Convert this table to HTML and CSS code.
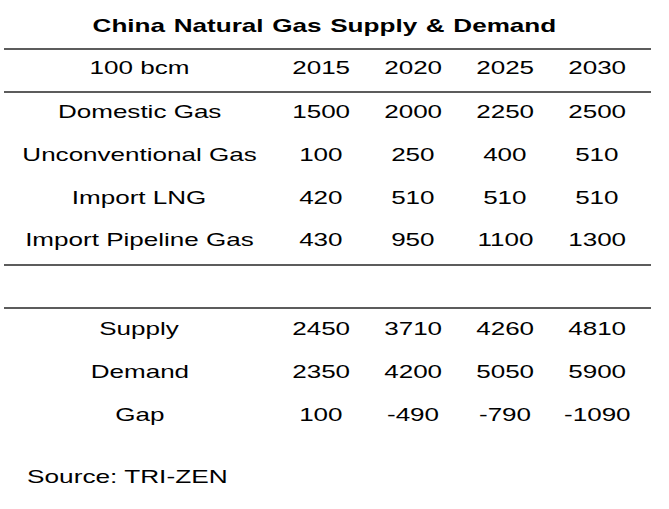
FILE: index.html
```html
<!DOCTYPE html>
<html lang="en">
<head>
<meta charset="utf-8">
<title>China Natural Gas Supply &amp; Demand</title>
<link rel="stylesheet" href="styles.css">
</head>
<body>
<div class="sheet">
  <h1 class="title"><span class="wide">China Natural Gas Supply &amp; Demand</span></h1>
  <div class="table">
    <div class="row head">
      <div class="cell"><span class="wide">100 bcm</span></div>
      <div class="cell"><span class="wide">2015</span></div>
      <div class="cell"><span class="wide">2020</span></div>
      <div class="cell"><span class="wide">2025</span></div>
      <div class="cell"><span class="wide">2030</span></div>
    </div>
    <div class="group top">
      <div class="row">
        <div class="cell"><span class="wide">Domestic Gas</span></div>
        <div class="cell"><span class="wide">1500</span></div>
        <div class="cell"><span class="wide">2000</span></div>
        <div class="cell"><span class="wide">2250</span></div>
        <div class="cell"><span class="wide">2500</span></div>
      </div>
      <div class="row">
        <div class="cell"><span class="wide">Unconventional Gas</span></div>
        <div class="cell"><span class="wide">100</span></div>
        <div class="cell"><span class="wide">250</span></div>
        <div class="cell"><span class="wide">400</span></div>
        <div class="cell"><span class="wide">510</span></div>
      </div>
      <div class="row">
        <div class="cell"><span class="wide">Import LNG</span></div>
        <div class="cell"><span class="wide">420</span></div>
        <div class="cell"><span class="wide">510</span></div>
        <div class="cell"><span class="wide">510</span></div>
        <div class="cell"><span class="wide">510</span></div>
      </div>
      <div class="row">
        <div class="cell"><span class="wide">Import Pipeline Gas</span></div>
        <div class="cell"><span class="wide">430</span></div>
        <div class="cell"><span class="wide">950</span></div>
        <div class="cell"><span class="wide">1100</span></div>
        <div class="cell"><span class="wide">1300</span></div>
      </div>
    </div>
    <div class="spacer"></div>
    <div class="group bottom">
      <div class="row">
        <div class="cell"><span class="wide">Supply</span></div>
        <div class="cell"><span class="wide">2450</span></div>
        <div class="cell"><span class="wide">3710</span></div>
        <div class="cell"><span class="wide">4260</span></div>
        <div class="cell"><span class="wide">4810</span></div>
      </div>
      <div class="row">
        <div class="cell"><span class="wide">Demand</span></div>
        <div class="cell"><span class="wide">2350</span></div>
        <div class="cell"><span class="wide">4200</span></div>
        <div class="cell"><span class="wide">5050</span></div>
        <div class="cell"><span class="wide">5900</span></div>
      </div>
      <div class="row">
        <div class="cell"><span class="wide">Gap</span></div>
        <div class="cell"><span class="wide">100</span></div>
        <div class="cell"><span class="wide">-490</span></div>
        <div class="cell"><span class="wide">-790</span></div>
        <div class="cell"><span class="wide">-1090</span></div>
      </div>
    </div>
  </div>
  <p class="source"><span class="wide left">Source: TRI-ZEN</span></p>
</div>
</body>
</html>
```
FILE: styles.css
```css
html, body {
  margin: 0;
  padding: 0;
  background: #ffffff;
}

body {
  width: 669px;
  height: 509px;
  overflow: hidden;
  font-family: "Liberation Sans", Arial, sans-serif;
  font-size: 19px;
  color: #000000;
}

.sheet {
  width: 647px;
  margin-left: 4px;
}

.wide {
  display: inline-block;
  white-space: nowrap;
  transform: scaleX(1.37);
  transform-origin: center;
}

.wide.left {
  transform-origin: left center;
  transform: scaleX(1.38);
}

.title {
  margin: 0;
  padding: 3px 6px 0 0;
  height: 45px;
  line-height: 45px;
  font-size: 18.5px;
  font-weight: bold;
  text-align: center;
  word-spacing: 1px;
}

.title .wide {
  transform: scaleX(1.41);
}

.table {
  border-top: 2px solid #5c5c5c;
}

.row {
  display: grid;
  grid-template-columns: 271px repeat(4, 92px);
  line-height: 38px;
  padding-bottom: 4.75px;
}

.cell {
  text-align: center;
}

.row.head {
  line-height: 36px;
  padding-bottom: 5px;
  border-bottom: 2px solid #5c5c5c;
}

.group.top {
  border-bottom: 2px solid #5c5c5c;
}

.spacer {
  height: 41px;
  border-bottom: 2px solid #5c5c5c;
}

.group.bottom .row {
  line-height: 40px;
  padding-bottom: 3px;
}

.source {
  margin: 28px 0 0 23px;
  line-height: 22px;
}
```
